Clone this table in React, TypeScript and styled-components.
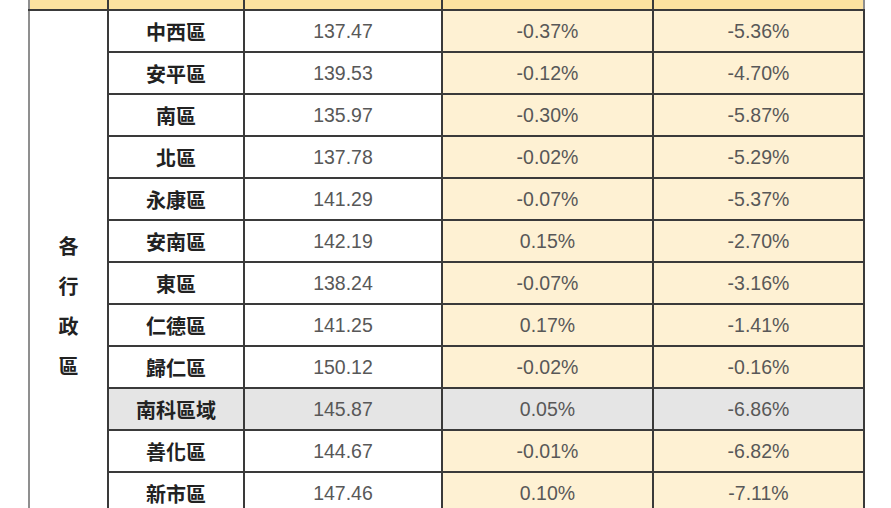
import React from 'react';
import styled, { createGlobalStyle } from 'styled-components';

interface Row {
  name: string;
  index: string;
  month: string;
  year: string;
  highlight?: boolean;
}

const rows: Row[] = [
  { name: '中西區', index: '137.47', month: '-0.37%', year: '-5.36%' },
  { name: '安平區', index: '139.53', month: '-0.12%', year: '-4.70%' },
  { name: '南區', index: '135.97', month: '-0.30%', year: '-5.87%' },
  { name: '北區', index: '137.78', month: '-0.02%', year: '-5.29%' },
  { name: '永康區', index: '141.29', month: '-0.07%', year: '-5.37%' },
  { name: '安南區', index: '142.19', month: '0.15%', year: '-2.70%' },
  { name: '東區', index: '138.24', month: '-0.07%', year: '-3.16%' },
  { name: '仁德區', index: '141.25', month: '0.17%', year: '-1.41%' },
  { name: '歸仁區', index: '150.12', month: '-0.02%', year: '-0.16%' },
  { name: '南科區域', index: '145.87', month: '0.05%', year: '-6.86%', highlight: true },
  { name: '善化區', index: '144.67', month: '-0.01%', year: '-6.82%' },
  { name: '新市區', index: '147.46', month: '0.10%', year: '-7.11%' },
];

const GlobalStyle = createGlobalStyle`
  html, body {
    margin: 0;
    padding: 0;
    background: #ffffff;
    overflow: hidden;
  }
  body {
    font-family: "Liberation Sans", "Noto Sans CJK TC", sans-serif;
  }
`;

const Page = styled.div`
  width: 891px;
  height: 508px;
  overflow: hidden;
  background: #fff;
`;

// header row sits mostly above the visible area, only its bottom strip shows
const Table = styled.table`
  margin: -31px 0 0 28px;
  width: 835px;
  border-collapse: collapse;
  table-layout: fixed;
  border-left: 2px solid #8f8f8f;
  border-right: 2px solid #8f8f8f;
`;

const HeadCell = styled.th`
  height: 40px;
  padding: 0;
  background: #fde3a0;
  border-left: 2px solid #3a3a3a;
  border-bottom: 2px solid #3a3a3a;
  &:first-child {
    border-left: none;
  }
`;

const Cell = styled.td<{ $tone: 'white' | 'cream' | 'grey' }>`
  height: 40px;
  padding: 0;
  text-align: center;
  vertical-align: middle;
  border: 2px solid #3a3a3a;
  background: ${(p) =>
    p.$tone === 'grey' ? '#e5e5e5' : p.$tone === 'cream' ? '#fef1d3' : '#ffffff'};
  font-family: "Liberation Sans", "Noto Sans CJK TC", sans-serif;
  font-size: 19.5px;
  color: #585858;
`;

const NameCell = styled(Cell)`
  font-family: "Noto Sans CJK TC", sans-serif;
  font-weight: bold;
  font-size: 20px;
  color: #222;
`;

const GroupCell = styled.td`
  padding: 215px 0 0;
  vertical-align: top;
  background: #fff;
  border-top: 2px solid #3a3a3a;
`;

const VerticalLabel = styled.div`
  display: flex;
  flex-direction: column;
  align-items: center;
  font-family: "Noto Sans CJK TC", sans-serif;
  font-weight: bold;
  font-size: 20px;
  line-height: 40px;
  color: #222;
`;

const App: React.FC = () => {
  return (
    <Page>
      <GlobalStyle />
      <Table>
        <colgroup>
          <col style={{ width: 79 }} />
          <col style={{ width: 136 }} />
          <col style={{ width: 198 }} />
          <col style={{ width: 211 }} />
          <col style={{ width: 211 }} />
        </colgroup>
        <thead>
          <tr>
            <HeadCell />
            <HeadCell />
            <HeadCell />
            <HeadCell />
            <HeadCell />
          </tr>
        </thead>
        <tbody>
          {rows.map((r, i) => (
            <tr key={r.name}>
              {i === 0 && (
                <GroupCell rowSpan={rows.length}>
                  <VerticalLabel>
                    <span>各</span>
                    <span>行</span>
                    <span>政</span>
                    <span>區</span>
                  </VerticalLabel>
                </GroupCell>
              )}
              <NameCell $tone={r.highlight ? 'grey' : 'white'}>{r.name}</NameCell>
              <Cell $tone={r.highlight ? 'grey' : 'white'}>{r.index}</Cell>
              <Cell $tone={r.highlight ? 'grey' : 'cream'}>{r.month}</Cell>
              <Cell $tone={r.highlight ? 'grey' : 'cream'}>{r.year}</Cell>
            </tr>
          ))}
        </tbody>
      </Table>
    </Page>
  );
};

export default App;
